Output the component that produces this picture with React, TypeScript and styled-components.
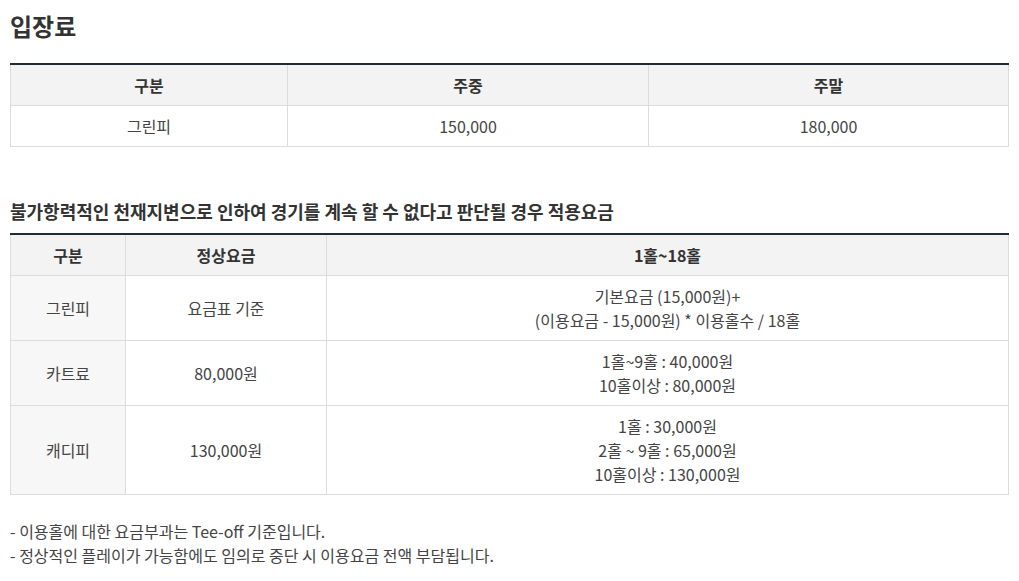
import React from "react";
import styled, { createGlobalStyle } from "styled-components";

const Global = createGlobalStyle`
  html, body { margin: 0; padding: 0; background: #fff; }
  body {
    font-family: "Noto Sans CJK KR", "Noto Sans", sans-serif;
    color: #444;
  }
`;

const Page = styled.div`
  padding: 10px 10px 20px 10px;
`;

const Title = styled.h2`
  margin: 0 0 21px 0;
  font-size: 24px;
  line-height: 32px;
  font-weight: 700;
  color: #333;
`;

const SubTitle = styled.h3`
  margin: 52px 0 10px 0;
  font-size: 18px;
  line-height: 24px;
  font-weight: 700;
  color: #333;
`;

const Table = styled.table`
  width: 100%;
  border-collapse: collapse;
  border-top: 2px solid #1f2c38;
  table-layout: fixed;
  font-size: 16px;
  line-height: 24px;
`;

const Th = styled.th`
  background: #f3f3f3;
  border: 1px solid #dcdcdc;
  border-top: none;
  padding: 8px 10px;
  font-weight: 700;
  color: #333;
  text-align: center;
`;

const Td = styled.td<{ $label?: boolean }>`
  background: ${(p) => (p.$label ? "#f7f7f7" : "#fff")};
  border: 1px solid #dcdcdc;
  padding: 8px 10px;
  color: #444;
  text-align: center;
  vertical-align: middle;
`;

const Notes = styled.ul`
  list-style: none;
  margin: 24px 0 0 0;
  padding: 0;
  font-size: 16px;
  line-height: 24px;
  color: #444;
`;

const Note = styled.li``;

const rows2 = [
  { k: "그린피", n: "요금표 기준", v: ["기본요금 (15,000원)+", "(이용요금 - 15,000원) * 이용홀수 / 18홀"] },
  { k: "카트료", n: "80,000원", v: ["1홀~9홀 : 40,000원", "10홀이상 : 80,000원"] },
  { k: "캐디피", n: "130,000원", v: ["1홀 : 30,000원", "2홀 ~ 9홀 : 65,000원", "10홀이상 : 130,000원"] },
];

export default function App() {
  return (
    <Page>
      <Global />
      <Title>입장료</Title>
      <Table>
        <colgroup>
          <col style={{ width: "277px" }} />
          <col style={{ width: "361px" }} />
          <col />
        </colgroup>
        <thead>
          <tr>
            <Th>구분</Th>
            <Th>주중</Th>
            <Th>주말</Th>
          </tr>
        </thead>
        <tbody>
          <tr>
            <Td>그린피</Td>
            <Td>150,000</Td>
            <Td>180,000</Td>
          </tr>
        </tbody>
      </Table>

      <SubTitle>불가항력적인 천재지변으로 인하여 경기를 계속 할 수 없다고 판단될 경우 적용요금</SubTitle>
      <Table>
        <colgroup>
          <col style={{ width: "115px" }} />
          <col style={{ width: "201px" }} />
          <col />
        </colgroup>
        <thead>
          <tr>
            <Th>구분</Th>
            <Th>정상요금</Th>
            <Th>1홀~18홀</Th>
          </tr>
        </thead>
        <tbody>
          {rows2.map((r) => (
            <tr key={r.k}>
              <Td $label>{r.k}</Td>
              <Td>{r.n}</Td>
              <Td>
                {r.v.map((line, i) => (
                  <React.Fragment key={i}>
                    {i > 0 && <br />}
                    {line}
                  </React.Fragment>
                ))}
              </Td>
            </tr>
          ))}
        </tbody>
      </Table>

      <Notes>
        <Note>- 이용홀에 대한 요금부과는 Tee-off 기준입니다.</Note>
        <Note>- 정상적인 플레이가 가능함에도 임의로 중단 시 이용요금 전액 부담됩니다.</Note>
      </Notes>
    </Page>
  );
}
